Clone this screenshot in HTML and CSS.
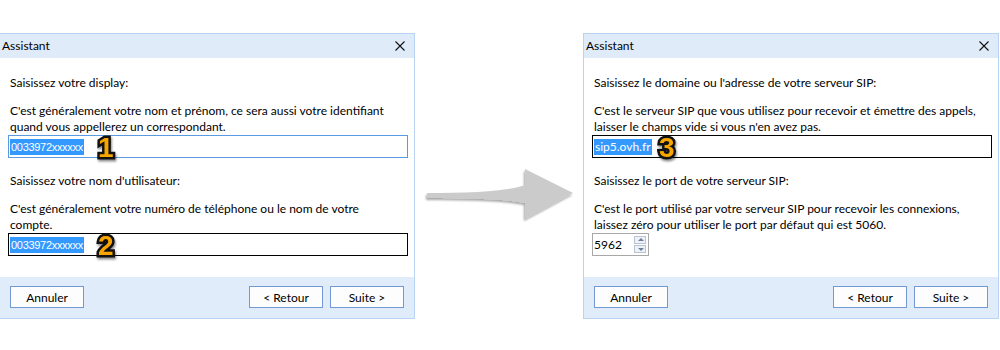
FILE: index.html
```html
<!DOCTYPE html>
<html>
	<head>
		<meta charset="UTF-8">
		<title>Assistant</title>
		<link rel="stylesheet" href="styles.css">
	</head>
	<body>
		<div class="scene">
			<section class="dialog dialog-first">
				<header class="titlebar">
					<span>Assistant</span>
					<svg class="close" width="12" height="12" viewBox="0 0 12 12"><path d="M1.5 1.5 L10.5 10.5 M10.5 1.5 L1.5 10.5" stroke="#111" stroke-width="1.1" fill="none"/></svg>
				</header>
				<div class="content">
					<p class="label">Saisissez votre display:</p>
					<p class="hint">C'est généralement votre nom et prénom, ce sera aussi votre identifiant<br>quand vous appellerez un correspondant.</p>
					<div class="field field-focus"><span class="sel sel-small">0033972xxxxxx</span><span class="badge">1</span></div>
					<p class="label label-next">Saisissez votre nom d'utilisateur:</p>
					<p class="hint">C'est généralement votre numéro de téléphone ou le nom de votre<br>compte.</p>
					<div class="field"><span class="sel sel-small">0033972xxxxxx</span><span class="badge">2</span></div>
				</div>
				<footer class="buttons">
					<button class="btn">Annuler</button>
					<div class="nav">
						<button class="btn">&lt; Retour</button>
						<button class="btn">Suite &gt;</button>
					</div>
				</footer>
			</section>

			<div class="arrow">
				<svg width="168" height="80" viewBox="0 0 168 80">
					<defs>
						<filter id="shade" x="-10%" y="-20%" width="120%" height="150%">
							<feDropShadow dx="-1" dy="2" stdDeviation="1.2" flood-color="#000" flood-opacity="0.35"/>
						</filter>
					</defs>
					<path d="M12 32 C 55 32, 90 31, 110 24 L110 8 L158 32 L110 58 L110 42 C 90 38, 55 37, 12 37 Z" fill="#cbcbcb" filter="url(#shade)"/>
				</svg>
			</div>

			<section class="dialog">
				<header class="titlebar">
					<span>Assistant</span>
					<svg class="close" width="12" height="12" viewBox="0 0 12 12"><path d="M1.5 1.5 L10.5 10.5 M10.5 1.5 L1.5 10.5" stroke="#111" stroke-width="1.1" fill="none"/></svg>
				</header>
				<div class="content">
					<p class="label">Saisissez le domaine ou l'adresse de votre serveur SIP:</p>
					<p class="hint">C'est le serveur SIP que vous utilisez pour recevoir et émettre des appels,<br>laisser le champs vide si vous n'en avez pas.</p>
					<div class="field"><span class="sel">sip5.ovh.fr</span><span class="badge badge-three">3</span></div>
					<p class="label label-next">Saisissez le port de votre serveur SIP:</p>
					<p class="hint">C'est le port utilisé par votre serveur SIP pour recevoir les connexions,<br>laissez zéro pour utiliser le port par défaut qui est 5060.</p>
					<div class="spin">
						<span class="spin-value">5962</span>
						<div class="spin-btns">
							<span class="spin-up"></span>
							<span class="spin-down"></span>
						</div>
					</div>
				</div>
				<footer class="buttons">
					<button class="btn">Annuler</button>
					<div class="nav">
						<button class="btn">&lt; Retour</button>
						<button class="btn">Suite &gt;</button>
					</div>
				</footer>
			</section>
		</div>
	</body>
</html>
```

FILE: styles.css
```css
body{margin: 0; background: #fff; font-family: Lato, "Liberation Sans", sans-serif; font-size: 12px; color: #000;}
p{margin: 0;}
.scene{display: flex; align-items: flex-start; padding-top: 33px; width: 1000px; overflow: hidden;}

.dialog{width: 416px; border: 1px solid #b9d3f3; box-sizing: border-box; background: #fff; flex: none;}
.dialog-first{margin-left: -1px;}
.titlebar{height: 24px; background: #e0ebf9; display: flex; align-items: center; justify-content: space-between; padding: 0 8px 0 2px;}
.titlebar span{line-height: 16px;}
.close{display: block;}

.content{height: 219px; box-sizing: border-box; padding: 16px 8px 0 8px;}
.label, .hint{line-height: 16px; padding-left: 2px;}
.label{margin-top: 1px;}
.hint{margin-top: 12px;}
.label-next{margin-top: 15px;}

.field{position: relative; width: 400px; height: 23px; box-sizing: border-box; border: 1px solid #000; padding: 2px 1px; display: flex; align-items: center;}
.field-focus{border-color: #5a9ae0;}
.sel{background: #3399ff; color: #fff; line-height: 16px; padding: 0 0 0 1px; border-right: 1px solid #c9731f;}
.sel-small{font-family: "Liberation Sans", sans-serif; font-size: 11px; letter-spacing: -0.3px;}

.badge{position: absolute; left: 89px; top: -2px; font-family: "Liberation Sans", sans-serif; font-weight: bold; font-size: 28px; line-height: 28px; color: #f8a500; -webkit-text-stroke: 5px #111; paint-order: stroke fill; filter: drop-shadow(1px 2px 1px rgba(0,0,0,.45));}
.badge-three{left: 66px;}

.spin{width: 57px; height: 23px; box-sizing: border-box; border: 1px solid #a8a8a8; display: flex; align-items: center; justify-content: space-between; padding: 0 2px 0 1px;}
.spin-value{line-height: 16px;}
.spin-btns{display: flex; flex-direction: column; gap: 1px;}
.spin-up, .spin-down{width: 12px; height: 8px; box-sizing: border-box; border: 1px solid #b8c3d3; background: #eef2f7; position: relative;}
.spin-up::after, .spin-down::after{content: ""; position: absolute; left: 3px; border-left: 3px solid transparent; border-right: 3px solid transparent;}
.spin-up::after{top: 1px; border-bottom: 3px solid #6f7f99;}
.spin-down::after{top: 2px; border-top: 3px solid #6f7f99;}

.buttons{height: 41px; background: #e1ecfa; display: flex; justify-content: space-between; align-items: flex-start; padding: 9px 10px 0 10px; box-sizing: border-box;}
.nav{display: flex; gap: 7px;}
.btn{width: 74px; height: 22px; box-sizing: border-box; border: 1px solid #7399d4; background: #fdfdfd; font-family: Lato, "Liberation Sans", sans-serif; font-size: 12px; color: #000; padding: 0;}

.arrow{width: 168px; flex: none; padding-top: 128px;}
.arrow svg{display: block;}
```
